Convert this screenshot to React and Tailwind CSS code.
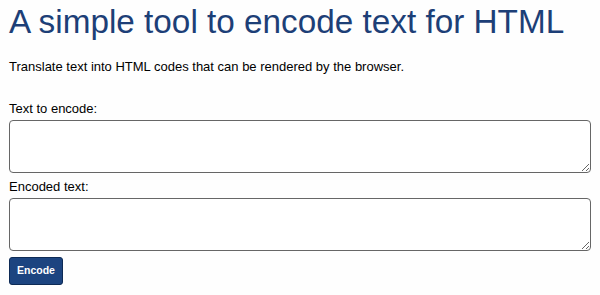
export default function App() {
  return (
    <div className="min-h-screen bg-[#fefefe] px-[9px] font-['Liberation_Sans',Arial,sans-serif] text-black">
      <h1 className="pt-[2px] text-[33.3px] leading-[40px] text-[#1d3f77]">A simple tool to encode text for HTML</h1>
      <p className="mt-[17px] text-[13px] leading-[16px]">
        Translate text into HTML codes that can be rendered by the browser.
      </p>

      <form className="mt-[26px]" onSubmit={(event) => event.preventDefault()}>
        <label className="block text-[13px] leading-[16px]">Text to encode:</label>
        <textarea className="mt-[3px] block h-[53px] w-full rounded-[4px] border border-[#666] bg-white" />

        <label className="mt-[6px] block text-[13px] leading-[16px]">Encoded text:</label>
        <textarea className="mt-[3px] block h-[53px] w-full rounded-[4px] border border-[#666] bg-white" />

        <button
          type="submit"
          className="mt-[6px] h-[28px] w-[54px] rounded-[3px] border border-[#0d2a55] bg-[#1c4480] text-[10.5px] font-bold text-white"
        >
          Encode
        </button>
      </form>
    </div>
  )
}
